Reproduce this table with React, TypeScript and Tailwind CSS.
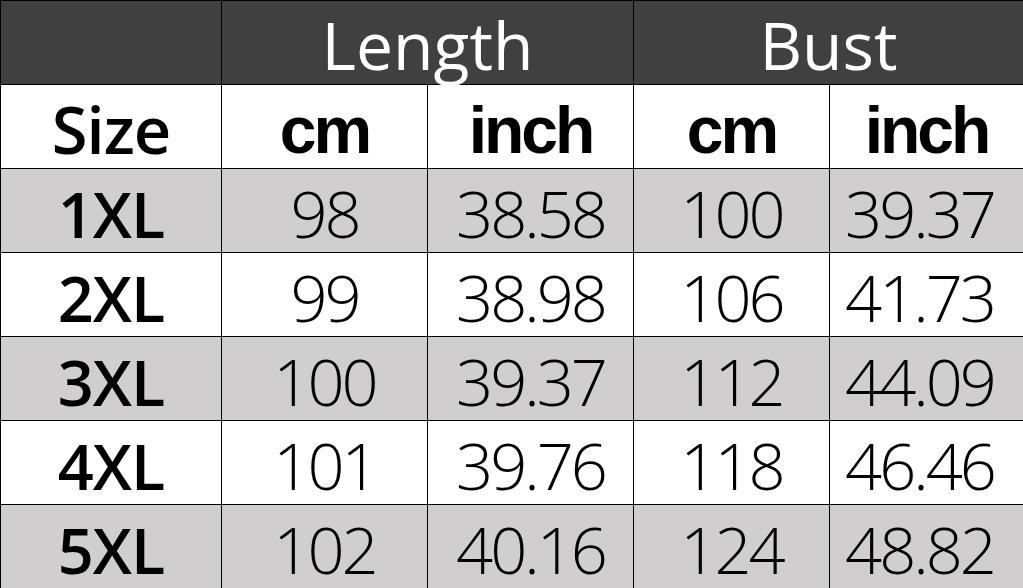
const rows = [
  ["1XL", "98", "38.58", "100", "39.37"],
  ["2XL", "99", "38.98", "106", "41.73"],
  ["3XL", "100", "39.37", "112", "44.09"],
  ["4XL", "101", "39.76", "118", "46.46"],
  ["5XL", "102", "40.16", "124", "48.82"],
];

const cols = "grid grid-cols-[221px_206px_206px_196px_194px]";

export default function App() {
  return (
    <div className="w-[1023px] h-[588px] overflow-hidden bg-white">
      <div className="w-[1025px] border-t border-l border-black">
        {/* top header */}
        <div className={`${cols} h-[84px] bg-[#404040] text-white font-['Open_Sans',sans-serif] font-medium text-[66px] leading-none`}>
          <div className="border-r border-b border-black" />
          <div className="col-span-2 border-r border-b border-black flex items-center justify-center pt-[2px]">
            Length
          </div>
          <div className="col-span-2 border-r border-b border-black flex items-center justify-center pt-[2px]">
            Bust
          </div>
        </div>

        {/* unit header */}
        <div className={`${cols} h-[84px] bg-white text-black leading-none`}>
          <div className="border-r border-b border-black flex items-center justify-center pt-[6px] font-['Open_Sans',sans-serif] font-semibold text-[65px] tracking-[-1px]">
            Size
          </div>
          {["cm", "inch", "cm", "inch"].map((u, i) => (
            <div
              key={i}
              className="border-r border-b border-black flex items-center justify-center pt-[6px] font-['Liberation_Sans',Arial,sans-serif] font-bold text-[66px] tracking-[-3px]"
            >
              {u}
            </div>
          ))}
        </div>

        {rows.map((r, i) => (
          <div
            key={r[0]}
            className={`${cols} h-[84px] leading-none text-black ${i % 2 === 0 ? "bg-[#d0cece]" : "bg-white"}`}
          >
            <div className="border-r border-b border-black flex items-center justify-center pt-[6px] font-['Open_Sans',sans-serif] font-semibold text-[63px] tracking-[-1px]">
              {r[0]}
            </div>
            {r.slice(1).map((v, j) => (
              <div
                key={j}
                className={`border-r border-b border-black flex items-center justify-center pt-[6px] font-['Open_Sans',sans-serif] font-light text-[65px] tracking-[-3px] ${j === 3 ? "pr-[14px]" : ""}`}
              >
                {v}
              </div>
            ))}
          </div>
        ))}
      </div>
    </div>
  );
}
